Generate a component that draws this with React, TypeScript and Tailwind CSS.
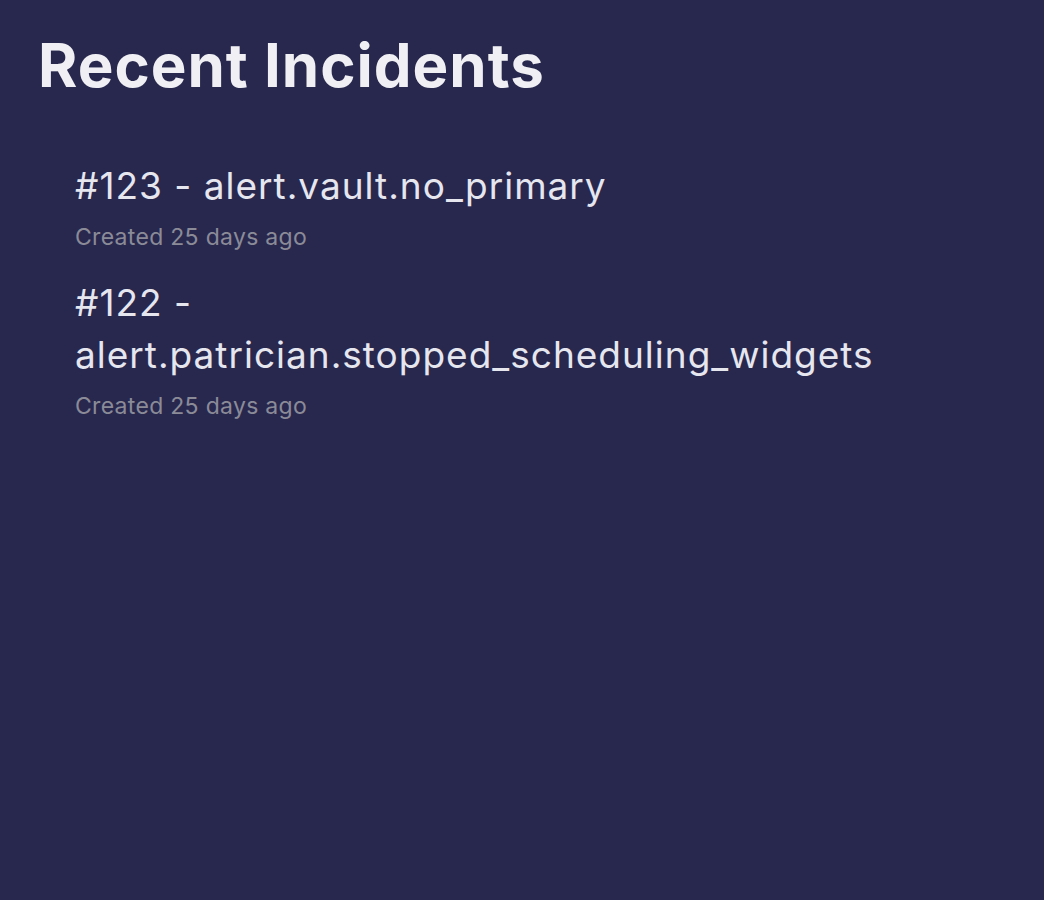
import React from 'react';

type Incident = {
  id: number;
  name: string;
  created: string;
};

const incidents: Incident[] = [
  { id: 123, name: 'alert.vault.no_primary', created: 'Created 25 days ago' },
  { id: 122, name: 'alert.patrician.stopped_scheduling_widgets', created: 'Created 25 days ago' },
];

const App: React.FC = () => {
  return (
    <div
      className="min-h-screen w-full bg-[#28284f] px-[38px] pt-[29px]"
      style={{ fontFamily: 'Inter, "Noto Sans", sans-serif' }}
    >
      <h1 className="text-[60px] font-bold leading-[72px] tracking-[1px] text-[#efeff4]">
        Recent Incidents
      </h1>

      <ul className="mt-[59px] flex w-[860px] flex-col gap-[26px] pl-[37px]">
        {incidents.map(incident => (
          <li key={incident.id}>
            <div className="text-[37px] leading-[52px] tracking-[1px] text-[#e6e6ef]">
              #{incident.id} - {incident.name}
            </div>
            <div className="mt-[11px] text-[23px] leading-[28px] tracking-[0.3px] text-[#8b8b98]">
              {incident.created}
            </div>
          </li>
        ))}
      </ul>
    </div>
  );
};

export default App;
